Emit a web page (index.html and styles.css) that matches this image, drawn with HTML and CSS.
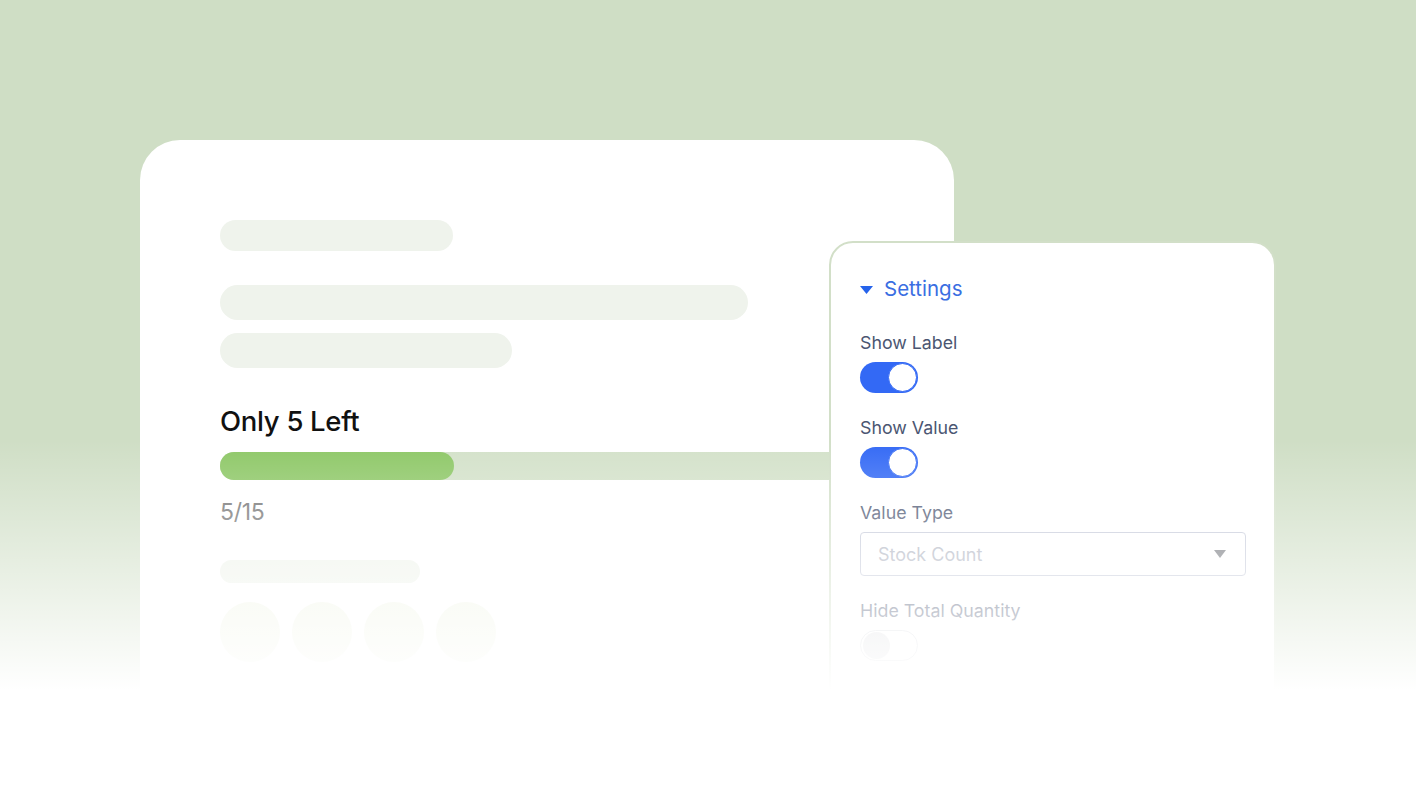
FILE: index.html
```html
<!DOCTYPE html>
<html>
<head>
<meta charset="utf-8">
<link rel="stylesheet" href="styles.css">
</head>
<body>
<div class="stage">
  <div class="card">
    <div class="sk sk1"></div>
    <div class="sk-group">
      <div class="sk sk2"></div>
      <div class="sk sk3"></div>
    </div>
    <div class="stock">
      <div class="stock-title">Only 5 Left</div>
      <div class="track"><div class="fill" style="width:234px"></div></div>
      <div class="stock-count">5/15</div>
    </div>
    <div class="sk sk4"></div>
    <div class="dots">
      <div class="dot"></div><div class="dot"></div><div class="dot"></div><div class="dot"></div>
    </div>
  </div>

  <div class="panel">
    <div class="panel-head">
      <svg class="caret" width="13" height="8" viewBox="0 0 13 8"><path d="M0 0h13L6.5 8z" fill="#2563eb"/></svg>
      <span>Settings</span>
    </div>
    <div class="fields">
      <div class="field">
        <div class="label">Show Label</div>
        <div class="toggle on"><div class="knob"></div></div>
      </div>
      <div class="field">
        <div class="label">Show Value</div>
        <div class="toggle on"><div class="knob"></div></div>
      </div>
      <div class="field">
        <div class="label">Value Type</div>
        <div class="select">
          <span>Stock Count</span>
          <svg width="12" height="8" viewBox="0 0 12 8"><path d="M0 0h12L6 8z" fill="#707379"/></svg>
        </div>
      </div>
      <div class="field">
        <div class="label">Hide Total Quantity</div>
        <div class="toggle off"><div class="knob"></div></div>
      </div>
      <div class="field">
        <div class="label">Show Icon</div>
        <div class="toggle off"><div class="knob"></div></div>
      </div>
    </div>
  </div>
  <div class="fade"></div>
</div>
</body>
</html>
```

FILE: styles.css
```css
html, body {
  margin: 0;
  padding: 0;
}
body {
  width: 1416px;
  height: 796px;
  overflow: hidden;
  background: #cfdec5;
  font-family: Inter, "Noto Sans", sans-serif;
}
.stage {
  position: relative;
  width: 1416px;
  height: 796px;
  overflow: hidden;
  padding: 140px 0 0 140px;
  box-sizing: border-box;
}
.card {
  width: 814px;
  height: 640px;
  background: #fff;
  border-radius: 40px;
  box-sizing: border-box;
  padding: 80px 80px 0 80px;
  display: flex;
  flex-direction: column;
}
.sk {
  background: #eff3ec;
  border-radius: 20px;
}
.sk1 { width: 233px; height: 31px; }
.sk-group {
  margin-top: 34px;
  display: flex;
  flex-direction: column;
  gap: 13px;
}
.sk2 { width: 528px; height: 35px; }
.sk3 { width: 292px; height: 35px; }
.stock {
  margin-top: 36px;
  display: flex;
  flex-direction: column;
}
.stock-title {
  font-size: 27.5px;
  line-height: 34px;
  color: #111;
  font-weight: 450;
  letter-spacing: -0.3px;
}
.track {
  margin-top: 14px;
  height: 28px;
  border-radius: 14px;
  background: #d3e1c9;
  width: 654px;
}
.fill {
  height: 28px;
  border-radius: 14px;
  background: #8dc766;
}
.stock-count {
  margin-top: 18px;
  font-size: 23px;
  line-height: 28px;
  color: #6f6f6f;
  letter-spacing: -0.3px;
}
.sk4 {
  margin-top: 34px;
  width: 200px;
  height: 23px;
  background: #eef3ea;
  border-radius: 12px;
}
.dots {
  margin-top: 19px;
  display: flex;
  gap: 12px;
}
.dot {
  width: 60px;
  height: 60px;
  border-radius: 50%;
  background: #f1f5e6;
}
.panel {
  position: absolute;
  left: 829px;
  top: 241px;
  width: 447px;
  height: 620px;
  box-sizing: border-box;
  background: #fff;
  border: 2px solid #d2dfc8;
  border-radius: 24px;
  padding: 33px 29px 0 29px;
  display: flex;
  flex-direction: column;
  gap: 30px;
}
.panel-head {
  display: flex;
  align-items: center;
  gap: 11px;
  color: #3a6ee2;
  font-size: 20.5px;
  line-height: 26px;
}
.caret { margin-top: 1px; }
.fields {
  display: flex;
  flex-direction: column;
  gap: 24px;
}
.field {
  display: flex;
  flex-direction: column;
  align-items: flex-start;
  gap: 8px;
}
.label {
  font-size: 17.8px;
  line-height: 22px;
  color: #4b5672;
}
.toggle {
  width: 58px;
  height: 31px;
  border-radius: 16px;
  box-sizing: border-box;
  display: flex;
  align-items: center;
  padding: 0 1px;
}
.toggle.on {
  background: #3369f5;
  justify-content: flex-end;
}
.toggle.off {
  background: #fff;
  border: 1.5px solid #d6d9df;
  justify-content: flex-start;
  padding: 0 1.5px;
}
.knob {
  width: 29px;
  height: 29px;
  border-radius: 50%;
  box-sizing: border-box;
  background: #fff;
  border: 1.5px solid #3369f5;
}
.toggle.off .knob {
  width: 27px;
  height: 27px;
  background: #dcdde1;
  border: none;
}
.select {
  width: 386px;
  height: 44px;
  box-sizing: border-box;
  border: 1.5px solid #c3c8d8;
  border-radius: 4px;
  padding: 0 19px 0 17px;
  display: flex;
  align-items: center;
  justify-content: space-between;
  color: #adb2bf;
  font-size: 18px;
}
.fade {
  position: absolute;
  left: 0;
  top: 0;
  width: 1416px;
  height: 796px;
  pointer-events: none;
  background: linear-gradient(to bottom, rgba(255,255,255,0) 440px, #fff 690px);
}
```
